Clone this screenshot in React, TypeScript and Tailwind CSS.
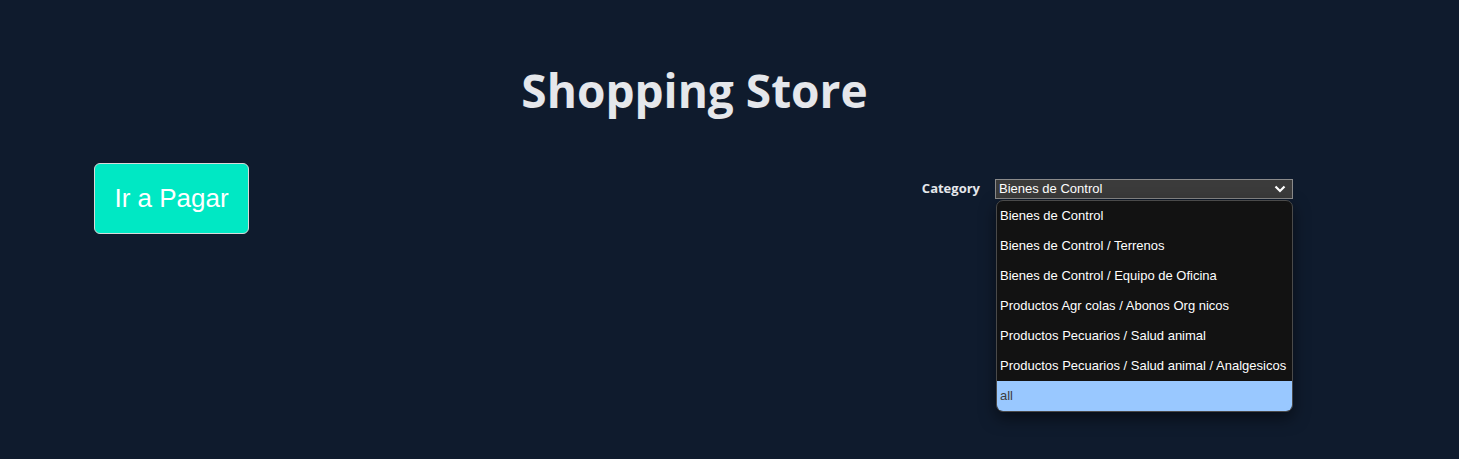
import React from "react";

const categories = [
  "Bienes de Control",
  "Bienes de Control / Terrenos",
  "Bienes de Control / Equipo de Oficina",
  "Productos Agr colas / Abonos Org nicos",
  "Productos Pecuarios / Salud animal",
  "Productos Pecuarios / Salud animal / Analgesicos",
  "all",
];

const CategorySelect = () => {
  const selected = "all";
  return (
    <div className="flex items-center gap-[15px] mt-[16px]">
      <span
        className="text-[13px] font-bold text-[#e5e7eb]"
        style={{ fontFamily: '"Open Sans", sans-serif' }}
      >
        Category
      </span>
      <div className="relative w-[298px]">
        <div className="flex h-[20px] items-center justify-between border border-[#8a8a8a] bg-[#3b3b3b] pl-[3px] pr-[6px] text-[13px] text-white">
          <span>Bienes de Control</span>
          <svg width="12" height="8" viewBox="0 0 12 8" fill="none">
            <path d="M1.5 1.5 6 6l4.5-4.5" stroke="white" strokeWidth="2.2" />
          </svg>
        </div>
        <ul className="absolute left-[1px] top-[21px] w-[297px] overflow-hidden rounded-[7px] border border-[#4a4a4a] bg-[#121212] shadow-[0_6px_16px_rgba(0,0,0,0.5)]">
          {categories.map((c) => (
            <li
              key={c}
              className={`flex h-[30px] items-center px-[3px] text-[13px] ${
                c === selected ? "bg-[#99c8ff] text-[#3d3d3d]" : "text-white"
              }`}
            >
              {c}
            </li>
          ))}
        </ul>
      </div>
    </div>
  );
};

export default function App() {
  return (
    <div
      className="min-h-[459px] bg-[#0f1b2d]"
      style={{ fontFamily: '"Liberation Sans", Arial, sans-serif' }}
    >
      <h1
        className="pt-[57px] pr-[70px] text-center text-[46px] font-bold leading-[66px] text-[#e5e7eb]"
        style={{ fontFamily: '"Open Sans", sans-serif' }}
      >
        Shopping Store
      </h1>
      <div className="mt-[40px] flex items-start justify-between pl-[94px] pr-[166px]">
        <button
          type="button"
          className="h-[71px] w-[155px] rounded-[6px] border border-[#d9d9d9] bg-[#00e8c4] text-[26px] text-white"
        >
          Ir a Pagar
        </button>
        <CategorySelect />
      </div>
    </div>
  );
}
